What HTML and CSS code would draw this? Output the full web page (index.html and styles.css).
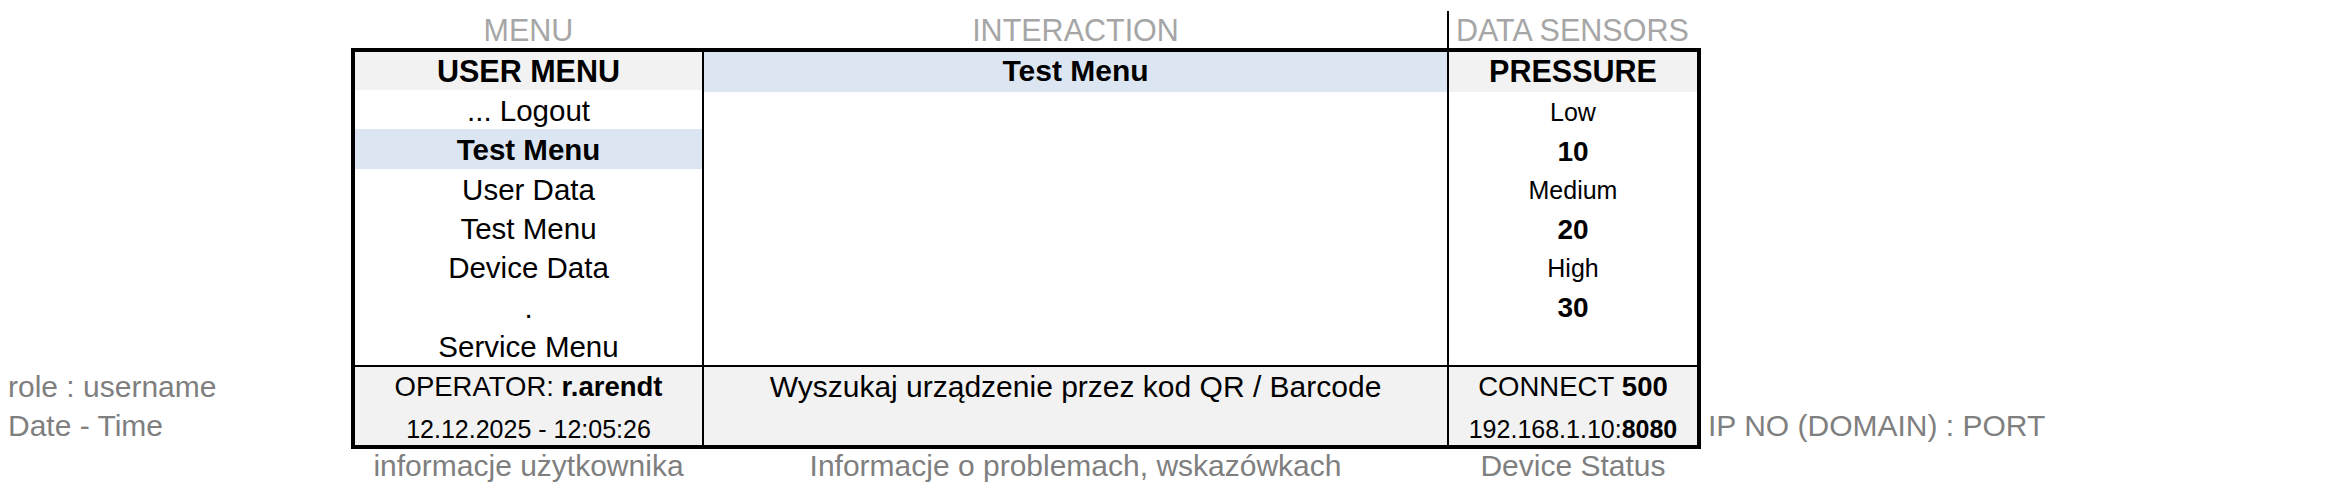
FILE: index.html
```html
<!DOCTYPE html>
<html lang="pl">
<head>
<meta charset="utf-8">
<title>Menu layout</title>
<link rel="stylesheet" href="styles.css">
</head>
<body>
<div class="sheet">
  <div class="labels top">
    <div class="lbl c1 center">MENU</div>
    <div class="lbl c3 center">INTERACTION</div>
    <div class="vline c4"></div>
    <div class="lbl c5 left">DATA SENSORS</div>
  </div>

  <div class="main">
    <div class="side side-left">
      <div class="side-row">role : username</div>
      <div class="side-row">Date - Time</div>
    </div>

    <div class="table">
      <div class="cell">
        <div class="head gray">USER MENU</div>
        <div class="rows menu">
          <div class="row">... Logout</div>
          <div class="row sel">Test Menu</div>
          <div class="row">User Data</div>
          <div class="row">Test Menu</div>
          <div class="row">Device Data</div>
          <div class="row">.</div>
          <div class="row">Service Menu</div>
        </div>
      </div>

      <div class="cell">
        <div class="head blue tall mid">Test Menu</div>
        <div class="rows"></div>
      </div>

      <div class="cell">
        <div class="head gray tall">PRESSURE</div>
        <div class="rows sensors">
          <div class="row small">Low</div>
          <div class="row val">10</div>
          <div class="row small">Medium</div>
          <div class="row val">20</div>
          <div class="row small">High</div>
          <div class="row val">30</div>
          <div class="row"></div>
        </div>
      </div>

      <div class="foot">
        <div class="frow f-main">OPERATOR:&nbsp;<b>r.arendt</b></div>
        <div class="frow f-sub">12.12.2025 - 12:05:26</div>
      </div>

      <div class="foot">
        <div class="frow f-hint">Wyszukaj urządzenie przez kod QR / Barcode</div>
        <div class="frow"></div>
      </div>

      <div class="foot">
        <div class="frow f-main">CONNECT&nbsp;<b>500</b></div>
        <div class="frow f-sub">192.168.1.10:<b>8080</b></div>
      </div>
    </div>

    <div class="side side-right">
      <div class="side-row"></div>
      <div class="side-row">IP NO (DOMAIN) : PORT</div>
    </div>
  </div>

  <div class="labels bottom">
    <div class="lbl c1 center">informacje użytkownika</div>
    <div class="lbl c3 center">Informacje o problemach, wskazówkach</div>
    <div class="lbl c5 center">Device Status</div>
  </div>
</div>
</body>
</html>
```

FILE: styles.css
```css
* {
  box-sizing: border-box;
}

html, body {
  margin: 0;
  padding: 0;
  background: #ffffff;
}

body {
  font-family: "Liberation Sans", Arial, sans-serif;
  color: #000000;
  width: 2339px;
  height: 496px;
  overflow: hidden;
}

.sheet {
  display: flex;
  flex-direction: column;
}

/* ---------- label rows above / below the table ---------- */
.labels {
  display: grid;
  grid-template-columns: 347px 2px 743px 2px 248px;
  margin-left: 355px;
  font-size: 30px;
  white-space: nowrap;
}

.labels.top {
  height: 48px;
  align-items: end;
  color: #a6a6a6;
  font-size: 30.5px;
}

.labels.bottom {
  align-items: start;
  color: #7f7f7f;
}

.lbl {
  line-height: normal;
}

.c1 { grid-column: 1; }
.c3 { grid-column: 3; }
.c4 { grid-column: 4; }
.c5 { grid-column: 5; }

.center {
  text-align: center;
}

.left {
  padding-left: 7px;
}

.vline {
  height: 37px;
  background: #000000;
  align-self: end;
}

/* ---------- main row ---------- */
.main {
  display: flex;
}

.side {
  display: flex;
  flex-direction: column;
  justify-content: flex-end;
  padding-bottom: 4px;
  font-size: 30px;
  color: #7f7f7f;
  white-space: nowrap;
}

.side-left {
  width: 351px;
  padding-left: 8px;
}

.side-right {
  flex: 1;
  padding-left: 7px;
}

.side-row {
  height: 39px;
  display: flex;
  align-items: center;
}

/* ---------- table ---------- */
.table {
  display: grid;
  grid-template-columns: 347px 743px 248px;
  grid-template-rows: 313px 78px;
  gap: 2px;
  background: #000000;
  border: 4px solid #000000;
}

.cell {
  background: #ffffff;
  display: flex;
  flex-direction: column;
}

.head {
  height: 38px;
  flex: none;
  display: flex;
  align-items: center;
  justify-content: center;
  font-size: 30.5px;
  font-weight: bold;
  white-space: nowrap;
}

.head.tall {
  height: 40px;
  padding-bottom: 2px;
}

.head.mid {
  font-size: 30px;
}

.gray {
  background: #f2f2f2;
}

.blue {
  background: #dce6f2;
}

.rows {
  flex: 1;
  display: grid;
  grid-template-rows: repeat(7, 1fr);
}

.row {
  display: flex;
  align-items: center;
  justify-content: center;
  font-size: 29.5px;
  white-space: nowrap;
}

.menu .row {
  padding-top: 3px;
}

.row.sel {
  background: #dce6f2;
  font-weight: bold;
}

.sensors .row {
  padding-top: 2px;
}

.row.small {
  font-size: 25px;
}

.row.val {
  font-size: 28px;
  font-weight: bold;
}

.foot {
  background: #f2f2f2;
  display: grid;
  grid-template-rows: 39px 39px;
}

.frow {
  display: flex;
  justify-content: center;
  align-items: center;
  white-space: nowrap;
}

.f-main {
  font-size: 27.5px;
}

.f-sub {
  font-size: 25px;
  align-items: flex-end;
  padding-bottom: 1px;
}

.f-hint {
  font-size: 30px;
}
```
